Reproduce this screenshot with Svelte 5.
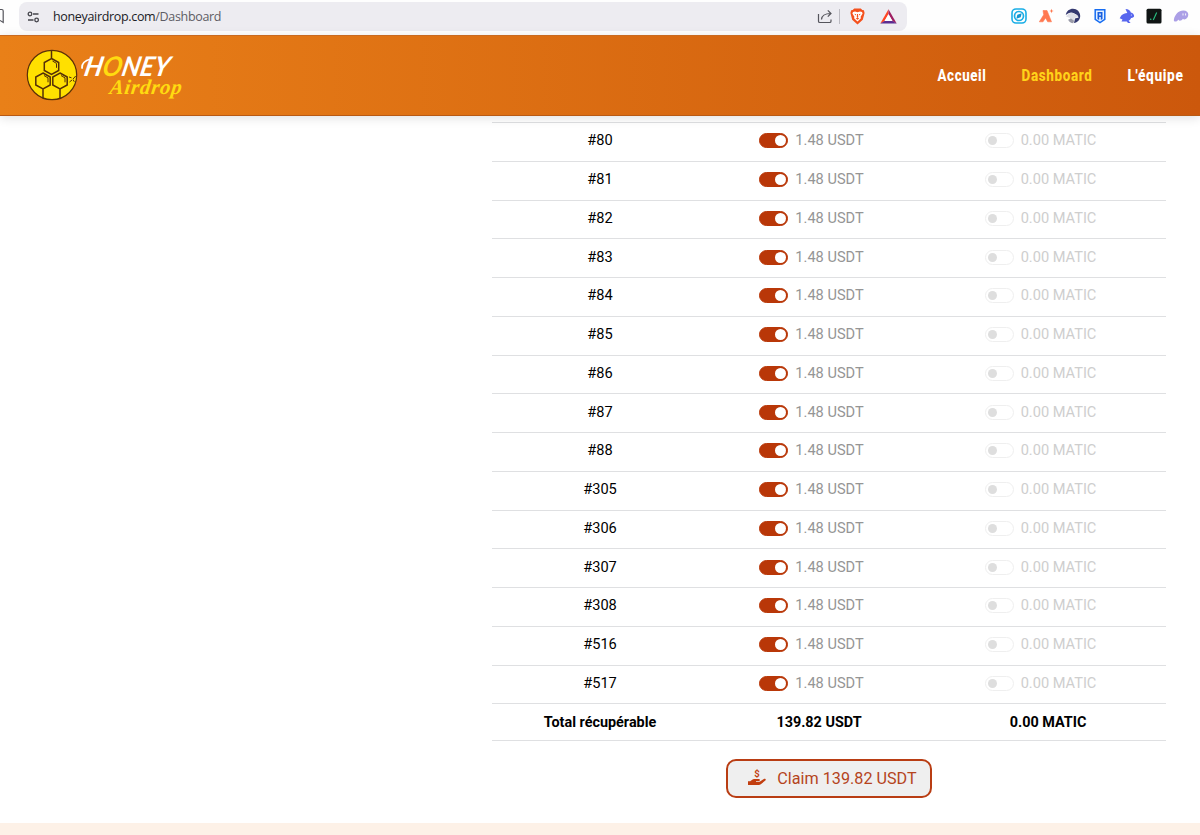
<script lang="ts">
  interface Token {
    id: number;
    usdt: string;
    matic: string;
  }

  const ids = [80, 81, 82, 83, 84, 85, 86, 87, 88, 305, 306, 307, 308, 516, 517];
  const tokens: Token[] = ids.map((id) => ({ id, usdt: '1.48', matic: '0.00' }));

  const links = [
    { label: 'Accueil', width: 49 },
    { label: 'Dashboard', width: 71 },
    { label: "L'équipe", width: 56 }
  ];

  let current = $state('Dashboard');
  let selected = $state<Record<number, boolean>>(Object.fromEntries(ids.map((id) => [id, true])));
</script>

<div class="page">
  <!-- Browser toolbar -->
  <div class="toolbar">
    <svg class="bookmark" width="5" height="16" viewBox="0 0 5 16">
      <path d="M0 1.5h1.8q1.4 0 1.4 1.4v11.6L0 12.4" fill="none" stroke="#55555c" stroke-width="1.2" />
    </svg>
    <div class="address">
      <svg class="tune" width="13" height="12" viewBox="0 0 13 12" fill="none" stroke="#45454c" stroke-width="1.3">
        <circle cx="3" cy="3" r="1.8" />
        <path d="M6 3h5.5M1 9h5.5" />
        <circle cx="9.6" cy="9" r="1.8" />
      </svg>
      <span class="url">honeyairdrop.com<span class="path">/Dashboard</span></span>
      <svg class="share" width="16" height="16" viewBox="0 0 16 16" fill="none" stroke="#55555c" stroke-width="1.2">
        <path d="M1.500 5v7.200q0 1.300 1.300 1.300h9.900q1.300 0 1.300-1.300V10.500" />
        <path d="M4.500 10.500c.3-3.700 2.600-6 9.300-6M10.800 1.300 14 4.500l-3.200 3.200" />
      </svg>
      <span class="divider"></span>
      <svg class="shield" width="15" height="17" viewBox="0 0 15 17">
        <path d="M4.200.5h6.600l1.500 1.500 1.600.2.700 2.800-1.800 6.800L7.500 16.500l-5.300-4.700L.4 5l.7-2.800 1.600-.2z" fill="#f4511e" />
        <path d="m3 4 2-.5 2.500.7 2.500-.7 2 .5.600 1.600-2 3.200.3 1.500-3.400 3.100-3.400-3.100.3-1.500-2-3.200z" fill="#fff" />
        <path d="m4.200 5.700 2 .5-.5 1.300zM10.800 5.700l-2 .5.500 1.300zM7 6h1l.3 3.300-.8.700-.8-.7zM5.700 10.500l1.800-.8 1.800.8-1.800 1.300z" fill="#f4511e" />
      </svg>
      <svg class="bat" width="17" height="15" viewBox="0 0 17 15">
        <path d="M8.500.3.300 14.500l4.200-2.300 4-7z" fill="#ff4724" />
        <path d="M8.500.3 16.700 14.500l-4.200-2.300-4-7z" fill="#9e1f63" />
        <path d="M.3 14.500h16.400l-4.200-2.500h-8z" fill="#5b2d91" />
        <path d="m8.500 5 4 7h-8z" fill="#fff" />
      </svg>
    </div>
    <div class="extensions">
      <svg width="16" height="16" viewBox="0 0 16 16" fill="none" stroke="#1aaee6">
        <rect x="1" y="1" width="14" height="14" rx="4" stroke-width="1.600" />
        <circle cx="8" cy="8" r="4.500" stroke-width="1.700" />
        <path d="M10.700 5.300 9.700 9.200 5.300 10.700l1-4z" fill="#1494cf" stroke="none" />
      </svg>
      <svg width="16" height="16" viewBox="0 0 16 16" fill="#ff7850">
        <path d="M5 2.500h4l4.500 11.300H9.700L7.500 9.900 5 13.800H1.300l4.400-7z" stroke="#ff7850" stroke-width=".6" stroke-linejoin="round" />
        <path d="m13.500.8.600 1.600 1.600.6-1.600.6-.6 1.600-.6-1.600-1.600-.6 1.600-.6z" />
      </svg>
      <svg width="16" height="16" viewBox="0 0 16 16">
        <path d="M.8 7C1.500 3 4.500.8 8 .8c4 0 7.200 3.200 7.200 7.200 0 3.700-2.600 6.600-6.200 7.100l1-4.500 3.700-1.200L12 7 8.800 5.200C6.500 3.800 3.500 4.500.8 7z" fill="#343970" />
        <path d="M1 8.500C3 5.500 6 4.400 9 5.600l3.300 1.700 1 1.700-3.700.9-.8 3.800C6.500 14.500 4 13.500 3.200 11.500l2.400-1.300z" fill="#dedfe7" />
        <path d="m6 10.500-2.800 1.200C4 14 6 15.200 8.300 15.200l.7-2.500z" fill="#9a9ba8" />
      </svg>
      <svg width="16" height="16" viewBox="0 0 16 16">
        <path d="M3.200 1.700h9.600v9.700L8 14.700l-4.800-3.300z" fill="#e4f1ff" stroke="#176df2" stroke-width="1.500" />
        <path d="M5.500 4h5v7l-1.700 1.100V9H7.200v3.100L5.500 11zm1.700 1.500v2h1.600v-2z" fill="#1a60df" fill-rule="evenodd" />
      </svg>
      <svg width="16" height="16" viewBox="0 0 16 16">
        <path d="M6.500 1c3.100.1 4.500 1.300 5.400 3.600 2 .4 3 1.800 3.200 3.200.1 1.400-1.400 2.200-3 2.100-.8 1.800-1.900 2.700-2.500 2.800l2 2.300H9l-1.200-1.500H2.500l1-2.100L.7 10.200l1.600-2.600C4 5.900 6 5 8.300 5z" fill="#5867ee" />
        <circle cx="12.300" cy="7.100" r=".5" fill="#fff" />
      </svg>
      <svg width="16" height="16" viewBox="0 0 16 16">
        <rect x=".5" y=".7" width="15" height="14.800" rx="1.500" fill="#101514" />
        <circle cx="4.700" cy="11.300" r=".8" fill="#28c283" />
        <path d="m7.300 12 3.400-7.400" stroke="#28c283" stroke-width="1.100" />
      </svg>
      <svg width="16" height="16" viewBox="0 0 16 16">
        <path d="M.9 11.400C2 6.500 5.500 2.500 10.300 2.500c3.300 0 5 1.900 5 4.300 0 2.600-1.900 4.700-4 4.700-.7 0-1.200-.3-1.300-.8-.8 1.200-2 2-3.200 2-.8 0-1.200-.5-1.200-1.200-.9 1.200-2.100 2.100-3.300 2.100-1 0-1.700-.8-1.400-2.200z" fill="#ab9fe6" />
        <path d="M10 5.800v1.300M12.600 5.800v1.300" stroke="#fff" stroke-width=".9" stroke-linecap="round" />
      </svg>
    </div>
  </div>

  <header class="site-head">
    <svg class="logo" width="170" height="60" viewBox="0 0 170 60" role="img" aria-label="Honey Airdrop">
      <circle cx="26" cy="30" r="24.700" fill="#ffe000" stroke="#5b3008" stroke-width="1.200" />
      <g fill="none" stroke="#542f08" stroke-width="1.500">
        <path d="m25.500 13.500 7.200 4v8l-7.200 4-7.200-4v-8zM17 28l7.200 4v8L17 44l-7.200-4v-8zM34 28l7.200 4v8L34 44l-7.200-4v-8zM25.500 5.500v8M17 44v9.300M34 44v9.300" />
        <path d="m26.500 16 4 2.400v4.400M18 30.500l4 2.400v4.400M35 30.500l4 2.400v4.400" stroke-width="1" />
        <path d="m43 32 2.500.8M49.700 31l-2.600 3M43.500 37l2.500-2M47 34.500l1.300 2.300" stroke-width="1" />
      </g>
      <g class="wordmark">
        <text transform="translate(57 31) skewX(-12)" class="brand" textLength="85" lengthAdjust="spacingAndGlyphs" fill="#fff">H<tspan fill="#ffdb10">O</tspan>NEY</text>
        <text transform="translate(83 49) skewX(-8)" class="brand sub" textLength="72" lengthAdjust="spacing" fill="#ffdb10">Airdrop</text>
      </g>
      <!-- brush swash on the left of the wordmark -->
      <path d="M56 23c-.3-4 3-7.500 9-9" fill="none" stroke="#fff" stroke-width="1.800" stroke-linecap="round" />
    </svg>
    <nav>
      {#each links as link (link.label)}
        <a
          href="#{link.label}"
          class:active={current === link.label}
          onclick={() => (current = link.label)}
        >
          <svg width={link.width} height="30">
            <text x="0.5" y="21" textLength={link.width} lengthAdjust="spacingAndGlyphs">{link.label}</text>
          </svg>
        </a>
      {/each}
    </nav>
  </header>

  <main>
    <div class="claims">
      {#each tokens as token (token.id)}
        <div class="row">
          <span class="cell id">#{token.id}</span>
          <label class="cell choice">
            <input type="checkbox" bind:checked={selected[token.id]} />
            <span class="amount">{token.usdt} USDT</span>
          </label>
          <label class="cell choice disabled">
            <input type="checkbox" disabled />
            <span class="amount">{token.matic} MATIC</span>
          </label>
        </div>
      {/each}
      <div class="row total">
        <span class="cell">Total récupérable</span>
        <span class="cell">139.82 USDT</span>
        <span class="cell">0.00 MATIC</span>
      </div>

      <button type="button" class="claim">
        <svg width="20" height="19" viewBox="0 0 20 19" fill="#c23e10">
          <path d="M1 12.200h2.200l2-1.500c.6-.4 1.200-.6 1.900-.6h4.600c1.500 0 1.600 1.900.1 2H9v.6h3.600l4.200-2.700c1.400-.8 2.700.5 1.500 1.600l-4.500 3.600c-.6.500-1.200.7-2 .7H1z" />
          <text x="10" y="7.800" text-anchor="middle">$</text>
        </svg>
        <span>Claim 139.82 USDT</span>
      </button>
    </div>
  </main>

  <footer></footer>
</div>

<style>
  :global(body) {
    margin: 0;
    background: #fff;
  }

  .page {
    width: 1200px;
    height: 835px;
    display: flex;
    flex-direction: column;
    overflow: hidden;
    font-family: Roboto, sans-serif;
    color: #000;
  }

  .toolbar {
    height: 35px;
    flex-shrink: 0;
    display: flex;
    align-items: flex-start;
    background: #fefefe;
  }

  .bookmark {
    margin-top: 8px;
  }

  .address {
    width: 888px;
    height: 29px;
    margin: 2px 0 0 14px;
    display: flex;
    align-items: center;
    background: #edecf1;
    border-radius: 8px;
    box-sizing: border-box;
    padding: 0 10px 0 8px;
  }

  .url {
    margin-left: 13px;
    flex: 1;
    font: 12.5px 'Open Sans', 'Noto Sans', sans-serif;
    letter-spacing: -0.33px;
    color: #202025;
  }

  .path {
    color: #5d5c64;
  }

  .divider {
    width: 1px;
    height: 15px;
    margin: 0 10px 0 6px;
    background: #bcbbc2;
  }

  .bat {
    margin-left: 15px;
  }

  .extensions {
    display: flex;
    gap: 11.1px;
    margin: 8px 0 0 103.500px;
  }

  .site-head {
    height: 81px;
    flex-shrink: 0;
    display: flex;
    align-items: center;
    justify-content: space-between;
    box-sizing: border-box;
    padding: 0 17px 2px 26px;
    border-top: 1px solid #c96a20;
    border-bottom: 1px solid #b85a14;
    background: linear-gradient(90deg, #e98018, #cc580c);
    box-shadow: 0 2px 10px rgba(0, 0, 0, 0.12);
    position: relative;
    z-index: 1;
  }

  .logo {
    overflow: visible;
  }

  .brand {
    font: italic 700 27px Lato, sans-serif;
  }

  .brand.sub {
    font: italic bold 21px 'Liberation Serif', serif;
  }

  nav {
    display: flex;
    gap: 35px;
  }

  nav a {
    height: 30px;
    fill: #fff;
    text-decoration: none;
  }

  nav svg {
    overflow: visible;
  }

  nav a.active {
    fill: #ffd21a;
  }

  nav text {
    font: 800 17.4px Roboto, sans-serif;
    letter-spacing: 0.8px;
  }

  main {
    flex: 1;
    padding: 6px 34px 0 492px;
  }

  .claims {
    display: flex;
    flex-direction: column;
  }

  .row {
    height: 38.75px;
    display: grid;
    grid-template-columns: 216px 222px 236px;
    box-sizing: border-box;
    border-top: 1px solid #dfe0e2;
  }

  .cell {
    display: flex;
    align-items: center;
    justify-content: center;
    padding-bottom: 3px;
    font-size: 14.6px;
  }

  .choice {
    padding-right: 15px;
    gap: 7px;
    color: #959595;
  }

  .disabled {
    color: #cecece;
  }

  input {
    appearance: none;
    width: 29px;
    height: 15px;
    margin: 1px 0 0;
    padding: 1px;
    display: flex;
    box-sizing: border-box;
    border: 1px solid #b93708;
    border-radius: 8px;
    background: #b93708;
  }

  input::before {
    content: '';
    width: 11px;
    height: 11px;
    margin-left: auto;
    border-radius: 50%;
    background: #fff;
  }

  input:not(:checked) {
    padding: 2px;
    border-color: #efefef;
    background: #fff;
  }

  input:not(:checked)::before {
    width: 9px;
    height: 9px;
    margin-left: 0;
    background: #dedede;
  }

  .total {
    height: 38px;
    border-bottom: 1px solid #dfe0e2;
  }

  .total .cell {
    font-weight: 700;
    padding-bottom: 0;
    font-size: 14.4px;
  }

  .claim {
    align-self: center;
    width: 206px;
    height: 39px;
    margin-top: 18px;
    padding: 0 0 0 6px;
    display: flex;
    align-items: center;
    justify-content: center;
    gap: 10px;
    border: 2px solid #b93d13;
    border-radius: 10px;
    background: #efefef;
    color: #b5441d;
    font: 16.2px Roboto, sans-serif;
  }

  .claim text {
    font: bold 9.5px Roboto, sans-serif;
  }

  footer {
    height: 12px;
    flex-shrink: 0;
    background: #fdf1e7;
  }
</style>
